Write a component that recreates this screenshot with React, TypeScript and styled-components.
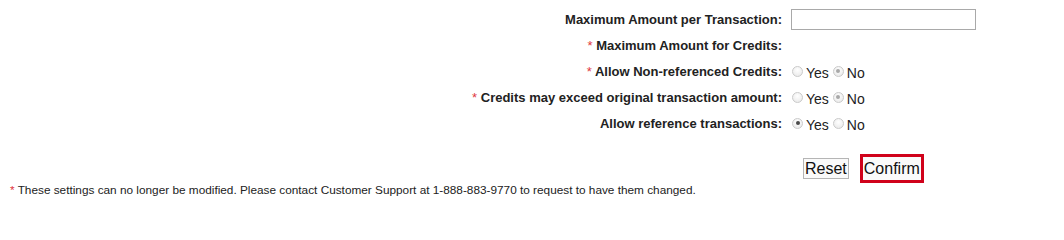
import React from 'react';
import styled, { createGlobalStyle } from 'styled-components';

const GlobalStyle = createGlobalStyle`
    body {
        margin: 0;
        background: #fff;
        font-family: Arial, 'Liberation Sans', sans-serif;
        color: #222;
    }
`;

type RadioRow = {
    label: string;
    required: boolean;
    value: 'yes' | 'no';
    disabled: boolean;
};

const radioRows: RadioRow[] = [
    { label: 'Allow Non-referenced Credits:', required: true, value: 'no', disabled: true },
    { label: 'Credits may exceed original transaction amount:', required: true, value: 'no', disabled: true },
    { label: 'Allow reference transactions:', required: false, value: 'yes', disabled: false },
];

const App = () => {
    return (
        <Page>
            <GlobalStyle />
            <Form>
                <Label>Maximum Amount per Transaction:</Label>
                <Value>
                    <TextBox type="text" />
                </Value>

                <Label>
                    <Asterisk>*</Asterisk> Maximum Amount for Credits:
                </Label>
                <Value />

                {radioRows.map((row, i) => (
                    <React.Fragment key={row.label}>
                        <Label>
                            {row.required && <Asterisk>*</Asterisk>}
                            {row.required && ' '}
                            {row.label}
                        </Label>
                        <Value>
                            <Radio
                                type="radio"
                                name={`r${i}`}
                                defaultChecked={row.value === 'yes'}
                                disabled={row.disabled}
                                $muted={row.disabled}
                            />
                            <Choice>Yes</Choice>
                            <Radio
                                type="radio"
                                name={`r${i}`}
                                defaultChecked={row.value === 'no'}
                                disabled={row.disabled}
                                $muted={row.disabled}
                            />
                            <Choice>No</Choice>
                        </Value>
                    </React.Fragment>
                ))}
            </Form>

            <Actions>
                <Button type="button">Reset</Button>
                <Button type="button" $framed>
                    Confirm
                </Button>
            </Actions>

            <Note>
                <Asterisk>*</Asterisk> These settings can no longer be modified. Please contact Customer
                Support at 1-888-883-9770 to request to have them changed.
            </Note>
        </Page>
    );
};

export default App;

const Page = styled.div`
    width: 1064px;
    height: 205px;
    overflow: hidden;
    padding-top: 6px;
    box-sizing: border-box;
`;

const Form = styled.div`
    display: grid;
    grid-template-columns: 782px 1fr;
    grid-auto-rows: 26px;
    column-gap: 9px;
    align-items: center;
`;

const Label = styled.div`
    text-align: right;
    font-size: 13px;
    font-weight: bold;
    color: #222;
    white-space: nowrap;
`;

const Asterisk = styled.span`
    color: #e0383e;
    font-weight: normal;
`;

const Value = styled.div`
    display: flex;
    align-items: center;
    height: 26px;
`;

const TextBox = styled.input`
    width: 185px;
    height: 21px;
    box-sizing: border-box;
    border: 1px solid #a9a9a9;
    padding: 1px 3px;
    margin: 0;
    background: #fff;
`;

const Radio = styled.input<{ $muted: boolean }>`
    appearance: none;
    flex: none;
    width: 11px;
    height: 11px;
    margin: 0 3px 0 1px;
    border-radius: 50%;
    border: 1px solid #cacaca;
    background: radial-gradient(circle at 50% 35%, #ffffff 0%, #e6e6e6 100%);
    box-sizing: border-box;
    position: relative;

    &:checked::after {
        content: '';
        position: absolute;
        left: 2.5px;
        top: 2.5px;
        width: 4px;
        height: 4px;
        border-radius: 50%;
        background: ${(p) => (p.$muted ? '#a8a8a8' : '#4a4a4a')};
    }
`;

const Choice = styled.span`
    font-size: 14px;
    margin-top: 3px;
    margin-right: 3px;
    color: #222;
`;

const Actions = styled.div`
    display: flex;
    align-items: center;
    gap: 11px;
    padding-left: 803px;
    margin-top: 18px;
`;

const Button = styled.button<{ $framed?: boolean }>`
    font-family: Arial, 'Liberation Sans', sans-serif;
    font-size: 16px;
    color: #111;
    background: #fafafa;
    margin: 0;
    line-height: 19px;
    border: ${(p) => (p.$framed ? '3px solid #d0021b' : '1px solid #b5b5b5')};
    padding: ${(p) => (p.$framed ? '2px 1px' : '0 1px')};
`;

const Note = styled.div`
    font-size: 11.8px;
    color: #222;
    padding-left: 10px;
    margin-top: 0;
`;
